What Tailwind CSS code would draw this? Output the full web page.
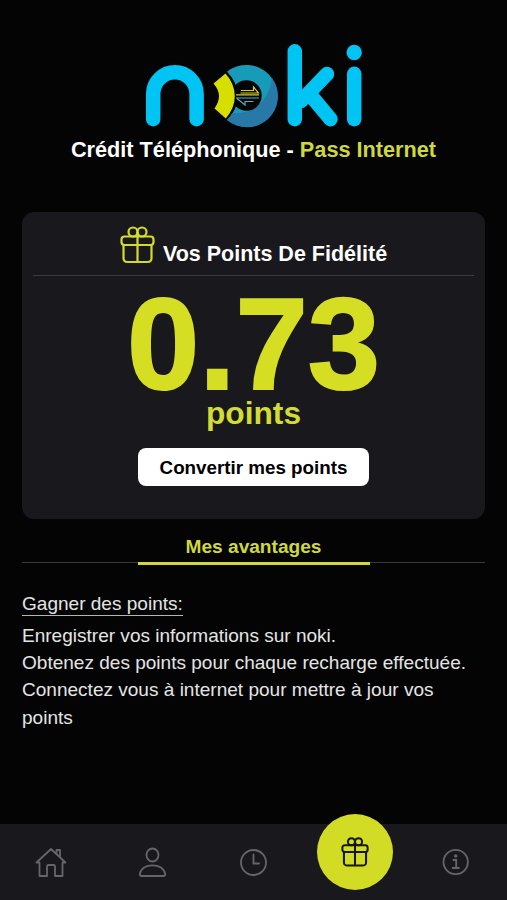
<!DOCTYPE html>
<html lang="fr">
<head>
    <meta charset="UTF-8">
    <meta name="viewport" content="width=device-width, initial-scale=1.0">
    <title>noki</title>
    <script src="https://cdn.jsdelivr.net/npm/@tailwindcss/browser@4"></script>
</head>
<body class="bg-[#040404] font-['Liberation_Sans',Arial,sans-serif] text-white">
    <div class="flex flex-col h-[900px] overflow-hidden">

        <!-- Logo -->
        <header class="flex flex-col items-center pt-10">
            <svg class="w-[230px] h-[92px]" viewBox="139 40 230 92" fill="none">
                <g stroke="#00c4f4" stroke-width="14.5" stroke-linecap="round">
                    <path d="M153.2 119.2V94a21.700 21.700 0 0 1 43.400 0v25.200"/>
                    <path d="M294.800 51.300v67.900M327 74l-26 27M310 94.500l20.500 24.700"/>
                    <path d="M354.200 73.800v45.400"/>
                </g>
                <circle cx="354.200" cy="52.500" r="7.700" fill="#00c4f4"/>
                <path d="M227 71.800A31 31 0 1 1 227 120Q237.500 110 237.500 96T227 71.800Z" fill="#179bb9"/>
                <path d="M272 78A31 31 0 0 1 227 120Q230 117 232 113C252 115 269 102 272 78Z" fill="#2878a8"/>
                <circle cx="246.500" cy="95.500" r="15.200" fill="#040404"/>
                <path d="M225.500 73.500Q234.800 84 234.800 96T225.800 118.500L214.500 108.500Q219 102 219 96T213.500 83.500Z" fill="#d6df00"/>
                <path d="M241 90.500h12.500V87l5 6h-18M236 94.800h23" stroke="#d3cd3a" stroke-width="1.200"/>
                <path d="M236 98h23M253.500 101.500h-8.500v3.500L237 98.500" stroke="#4fb3bd" stroke-width="1.200"/>
            </svg>
            <h1 class="mt-[5px] text-[21.7px] leading-[26px] font-bold whitespace-nowrap">Crédit Téléphonique - <span class="text-[#d0d93c]">Pass Internet</span></h1>
        </header>

        <!-- Points -->
        <section class="mx-[22px] mt-[49px] h-[307px] shrink-0 rounded-xl bg-[#19191d] px-[11px] flex flex-col items-center">
            <div class="w-full h-[64px] border-b border-[#3c3c40] flex justify-center items-end pb-[7px] gap-2">
                <svg class="w-[35px] h-[38px] mb-1" viewBox="0 0 35 38" fill="none" stroke="#d3dc29" stroke-width="2.200">
                    <rect x="1.500" y="10.500" width="32" height="8.500" rx="3"/>
                    <path d="M3.500 19v13.500a3.500 3.500 0 0 0 3.500 3.500h21a3.500 3.500 0 0 0 3.500-3.500V19M17.500 6v30"/>
                    <circle cx="13" cy="6" r="4.500"/>
                    <circle cx="22" cy="6" r="4.500"/>
                </svg>
                <h2 class="text-[21.5px] leading-7 font-bold">Vos Points De Fidélité</h2>
            </div>
            <p class="mt-[15px] text-[130px] leading-[106px] font-bold text-[#d6de23] [-webkit-text-stroke:2px_#d6de23]">0.73</p>
            <p class="text-[31.7px] leading-8 font-bold text-[#d3db35]">points</p>
            <button class="mt-[19px] pt-0.5 w-[231px] h-[38px] rounded-lg bg-white text-black text-[18.8px] font-bold">Convertir mes points</button>
        </section>

        <!-- Tab -->
        <div class="mx-[22px] mt-4 h-7 shrink-0 border-b border-[#39393b] flex justify-center">
            <div class="w-[232px] h-[29.5px] border-b-3 border-[#d0d93c] text-center text-[19.1px] leading-6 font-bold text-[#d0d93c]">Mes avantages</div>
        </div>

        <section class="mx-[22px] mt-[30px] text-[19.05px] leading-[27.2px] text-[#e4e4e4]">
            <div class="flex mb-[6px]">
                <h3 class="border-b border-[#b5b5b5] leading-[22px]">Gagner des points:</h3>
            </div>
            <p>Enregistrer vos informations sur noki.</p>
            <p>Obtenez des points pour chaque recharge effectuée.</p>
            <p>Connectez vous à internet pour mettre à jour vos points</p>
        </section>

        <!-- Navigation -->
        <nav class="mt-auto h-[76px] shrink-0 bg-[#19191d] grid grid-cols-5 justify-items-center items-center text-[#66666a]">
            <a href="#">
                <svg class="w-8 h-8" viewBox="0 0 32 32" fill="none" stroke="currentColor" stroke-width="1.8" stroke-linejoin="round" stroke-linecap="round">
                    <path d="M1.500 16.500L16 3 30.500 16.500h-3V30h-7.500V20.500a1.500 1.500 0 0 0-1.500-1.500h-5a1.500 1.500 0 0 0-1.500 1.500V30h-7.500V16.500zM21.500 7.500V4H25v7"/>
                </svg>
            </a>
            <a href="#">
                <svg class="w-8 h-8" viewBox="0 0 32 32" fill="none" stroke="currentColor" stroke-width="1.8">
                    <ellipse cx="16.500" cy="9" rx="6" ry="6.500"/>
                    <path d="M5.500 30a1.700 1.700 0 0 1-1.700-2C5 22.500 10 19.300 16.500 19.300S28 22.500 29.200 28a1.700 1.700 0 0 1-1.700 2z"/>
                </svg>
            </a>
            <a href="#">
                <svg class="w-8 h-8" viewBox="0 0 32 32" fill="none" stroke="currentColor" stroke-width="1.8" stroke-linecap="round">
                    <circle cx="16.500" cy="16.500" r="12.500"/>
                    <path d="M16.500 8.500v9h5.500"/>
                </svg>
            </a>
            <a href="#" class="-mt-[21px] w-[76px] h-[76px] rounded-full bg-[#d3dc25] text-[#17170c] flex items-center justify-center">
                <svg class="w-[28px] h-[30px]" viewBox="0 0 35 38" fill="none" stroke="currentColor" stroke-width="2.6">
                    <rect x="1.500" y="10.500" width="32" height="8.500" rx="3"/>
                    <path d="M3.500 19v13.500a3.500 3.500 0 0 0 3.500 3.500h21a3.500 3.500 0 0 0 3.500-3.500V19M17.500 6v30"/>
                    <circle cx="13" cy="6" r="4.500"/>
                    <circle cx="22" cy="6" r="4.500"/>
                </svg>
            </a>
            <a href="#">
                <svg class="w-8 h-8" viewBox="0 0 32 32" fill="none" stroke="currentColor" stroke-width="1.8">
                    <circle cx="15.700" cy="16" r="12.200"/>
                    <path d="M12.700 14h3.500v8M12 22h7.500"/>
                    <circle cx="15.700" cy="10" r="1.700" fill="currentColor" stroke="none"/>
                </svg>
            </a>
        </nav>
    </div>
</body>
</html>
